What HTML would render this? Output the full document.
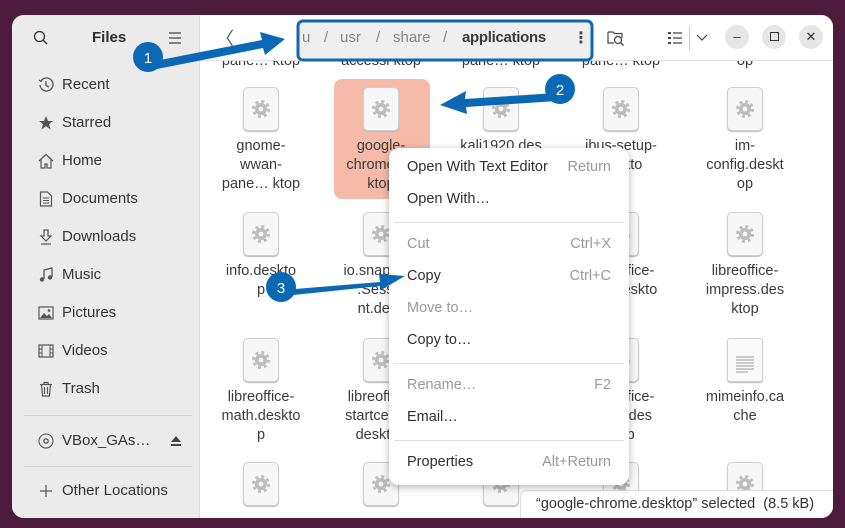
<!DOCTYPE html>
<html><head><meta charset="utf-8"><style>
*{box-sizing:border-box;margin:0;padding:0}
body{width:845px;height:528px;overflow:hidden;background:#4d1b3b;font-family:"Liberation Sans","DejaVu Sans",sans-serif;position:relative}
.win{position:absolute;left:12px;top:15px;width:821px;height:503px;border-radius:12px;overflow:hidden;background:#fff}
.side{position:absolute;left:0;top:0;width:188px;height:503px;background:#ebebeb;border-right:1px solid #ddd}
.a{position:absolute}
.si{position:absolute;left:50px;font-size:15px;color:#333}
.ic{position:absolute;left:26px;width:16px;height:16px}
.sep{position:absolute;left:12px;width:168px;height:1px;background:#d4d4d4}
.content{position:absolute;left:189px;top:46px;width:632px;height:457px;overflow:hidden;background:#fff}
.hdr{position:absolute;left:189px;top:0;width:632px;height:46px;background:#fff;border-bottom:1px solid #e2e2e2}
.cell{position:absolute;width:110px;text-align:center;font-size:14.5px;line-height:19px;color:#3a3a3a}
.fi{position:absolute;width:36px;height:44px;border:1px solid #cfcfcf;border-radius:5px;background:#f7f7f7;box-shadow:0 1px 1px #bbb}
.menu{position:absolute;left:389px;top:148px;width:240px;height:337px;background:#fff;border-radius:10px;box-shadow:0 2px 8px rgba(0,0,0,.3)}
.mi{position:absolute;left:18px;font-size:14.5px;color:#2e2e2e}
.mi.d{color:#999}
.k{position:absolute;right:18px;font-size:14.5px;color:#999}
.ms{position:absolute;left:5px;width:230px;height:1px;background:#dedede}
.wb{position:absolute;top:10px;width:24px;height:24px;border-radius:12px;background:#e6e6e6;text-align:center;line-height:24px;font-size:13px;color:#333}
.p{position:absolute;top:14px;font-size:15px;color:#888}
</style></head><body>
<div class="win">
<div class="side">
 <svg class="a" style="left:21px;top:15px" width="16" height="16" viewBox="0 0 16 16"><circle cx="6.5" cy="6.5" r="5" fill="none" stroke="#333" stroke-width="1.3"/><path d="M10 10l4 4" stroke="#333" stroke-width="1.4"/></svg>
 <div class="a" style="left:80px;top:14px;font-size:15px;font-weight:bold;color:#2e2e2e">Files</div>
 <svg class="a" style="left:157px;top:17px" width="12" height="12"><path d="M0 1h12M0 6h12M0 11h12" stroke="#444" stroke-width="1.2"/></svg>
 <svg class="ic" style="top:62px" viewBox="0 0 16 16"><path d="M3 4A6.5 6.5 0 1 1 2 8" fill="none" stroke="#555" stroke-width="1.3"/><path d="M1 3l2 1.5L4.5 2" fill="none" stroke="#555" stroke-width="1.2"/><path d="M8 4v4.5l3 1.5" fill="none" stroke="#555" stroke-width="1.3"/></svg>
 <div class="si" style="top:61px">Recent</div>
 <svg class="ic" style="top:100px" viewBox="0 0 16 16"><path d="M8 1l2 5h5l-4 3.3 1.6 5.2L8 11.3 3.4 14.5 5 9.3 1 6h5z" fill="#555"/></svg>
 <div class="si" style="top:99px">Starred</div>
 <svg class="ic" style="top:138px" viewBox="0 0 16 16"><path d="M1 8L8 1.5 15 8M3 6.5V15h4v-4h2v4h4V6.5" fill="none" stroke="#555" stroke-width="1.2"/></svg>
 <div class="si" style="top:137px">Home</div>
 <svg class="ic" style="top:176px" viewBox="0 0 16 16"><path d="M2.5 1h7l4 4v10h-11z" fill="none" stroke="#555" stroke-width="1.2"/><path d="M5 7h6M5 9.5h6M5 12h6" stroke="#555"/></svg>
 <div class="si" style="top:175px">Documents</div>
 <svg class="ic" style="top:214px" viewBox="0 0 16 16"><path d="M6 1h4v6h3L8 12 3 7h3zM3 15h10" fill="none" stroke="#555" stroke-width="1.2"/></svg>
 <div class="si" style="top:213px">Downloads</div>
 <svg class="ic" style="top:252px" viewBox="0 0 16 16"><path d="M6 12V3l8-2v9" fill="none" stroke="#555" stroke-width="1.3"/><circle cx="4" cy="12.5" r="2.2" fill="#555"/><circle cx="12" cy="10.5" r="2.2" fill="#555"/></svg>
 <div class="si" style="top:251px">Music</div>
 <svg class="ic" style="top:290px" viewBox="0 0 16 16"><rect x="1" y="2" width="14" height="12" fill="none" stroke="#555" stroke-width="1.2"/><path d="M2 13l4-5 3 3 2-2 3 4z" fill="#555"/><circle cx="11" cy="5.5" r="1.3" fill="#555"/></svg>
 <div class="si" style="top:289px">Pictures</div>
 <svg class="ic" style="top:328px" viewBox="0 0 16 16"><rect x="1" y="2" width="14" height="12" fill="none" stroke="#555" stroke-width="1.2"/><path d="M4 2v12M12 2v12M1 6h3M1 10h3M12 6h3M12 10h3" stroke="#555"/></svg>
 <div class="si" style="top:327px">Videos</div>
 <svg class="ic" style="top:366px" viewBox="0 0 16 16"><path d="M2 3.5h12M6 3.5V1.5h4v2M3.5 3.5l1 11.5h7l1-11.5M6.5 6v7M9.5 6v7" fill="none" stroke="#555" stroke-width="1.2"/></svg>
 <div class="si" style="top:365px">Trash</div>
 <div class="sep" style="top:400px"></div>
 <svg class="ic" style="top:418px" viewBox="0 0 16 16"><circle cx="8" cy="8" r="7" fill="none" stroke="#555" stroke-width="1.1"/><circle cx="8" cy="8" r="2.2" fill="none" stroke="#555" stroke-width="1.3"/></svg>
 <div class="si" style="top:417px">VBox_GAs…</div>
 <svg class="a" style="left:159px;top:421px" width="10" height="10"><path d="M5 0l5 6H0z M0 8h10v2H0z" fill="#444"/></svg>
 <div class="sep" style="top:451px"></div>
 <svg class="ic" style="top:468px" viewBox="0 0 16 16"><path d="M8 2v12M2 8h12" stroke="#555" stroke-width="1.2"/></svg>
 <div class="si" style="top:467px">Other Locations</div>
</div>
<div class="content" id="c"></div>
<div class="hdr">
 <div class="a" style="left:15px;top:10px;font-size:18px;color:#555">〈</div>
 <div class="p" style="left:101px">u</div>
 <div class="p" style="left:123px">/</div>
 <div class="p" style="left:139px">usr</div>
 <div class="p" style="left:175px">/</div>
 <div class="p" style="left:192px">share</div>
 <div class="p" style="left:242px">/</div>
 <div class="p" style="left:261px;color:#333;font-weight:bold;letter-spacing:-0.3px">applications</div>
 <div class="a" style="left:372px;top:13px;font-size:16px;color:#444;font-weight:bold">⋮</div>
 <svg class="a" style="left:406px;top:14px" width="18" height="17" viewBox="0 0 18 17"><path d="M1 3h5l1.5 1.5H15V9M1 3v11h6" fill="none" stroke="#444" stroke-width="1.2"/><circle cx="11" cy="11" r="3.5" fill="none" stroke="#444" stroke-width="1.3"/><path d="M13.5 13.5l3 3" stroke="#444" stroke-width="1.3"/></svg>
 <svg class="a" style="left:467px;top:16px" width="14" height="13"><path d="M0 1h3v2H0zM0 6h3v2H0zM0 11h3v2H0z" fill="#444"/><path d="M5 2h9M5 7h9M5 12h9" stroke="#444" stroke-width="1.2"/></svg>
 <div class="a" style="left:488px;top:11px;width:1px;height:24px;background:#ccc"></div>
 <svg class="a" style="left:495px;top:19px" width="12" height="8"><path d="M1 1l5 5 5-5" fill="none" stroke="#444" stroke-width="1.2"/></svg>
 <div class="wb" style="left:524px">–</div>
 <div class="wb" style="left:561px"><span style="display:inline-block;width:9px;height:9px;border:1.3px solid #333;margin-top:7px;vertical-align:top"></span></div>
 <div class="wb" style="left:598px">✕</div>
</div>
</div>

<div class="a" style="left:334px;top:79px;width:96px;height:120px;background:#f6bba8;border-radius:8px"></div>
<div id="grid"></div>

<div class="a" style="left:520px;top:490px;width:313px;height:28px;background:#fff;border:1px solid #ddd;border-right:none;border-bottom:none;border-radius:6px 0 12px 0;font-size:14.5px;color:#333;padding:5px 0 0 15px;white-space:nowrap">“google-chrome.desktop” selected&nbsp;&nbsp;(8.5 kB)</div>

<div class="menu">
 <div class="mi" style="top:11px">Open With Text Editor</div><div class="k" style="top:11px">Return</div>
 <div class="mi" style="top:43px">Open With…</div>
 <div class="ms" style="top:74px"></div>
 <div class="mi d" style="top:88px">Cut</div><div class="k" style="top:88px">Ctrl+X</div>
 <div class="mi" style="top:120px">Copy</div><div class="k" style="top:120px">Ctrl+C</div>
 <div class="mi d" style="top:152px">Move to…</div>
 <div class="mi" style="top:184px">Copy to…</div>
 <div class="ms" style="top:215px"></div>
 <div class="mi d" style="top:229px">Rename…</div><div class="k" style="top:229px">F2</div>
 <div class="mi" style="top:261px">Email…</div>
 <div class="ms" style="top:292px"></div>
 <div class="mi" style="top:306px">Properties</div><div class="k" style="top:306px">Alt+Return</div>
</div>

<svg class="a" style="left:0;top:0" width="845" height="528">
 <rect x="298" y="21" width="294" height="39" rx="5" fill="rgba(120,120,120,0.12)" stroke="#1268b0" stroke-width="3"/>
 <g fill="#0a68b4">
  <path d="M150 62 L262 40 L260 32 L285 39 L265 55 L263 48 L152 70z"/>
  <circle cx="148" cy="57" r="15"/>
  <path d="M556 93 L465 99 L466 91 L440 105 L467 114 L466 107 L557 101z"/>
  <circle cx="560" cy="89" r="15"/>
  <path d="M283 290 L380 282 L379 274 L405 276 L381 290 L380 286 L284 296z"/>
  <circle cx="281" cy="287" r="15"/>
 </g>
 <g fill="#fff" font-family="Liberation Sans,sans-serif" font-size="15" text-anchor="middle">
  <text x="148" y="63">1</text><text x="560" y="95">2</text><text x="281" y="293">3</text>
 </g>
</svg>

<script>
var cols=[261,381,501,621,745];
var rows=[{i:87,t:[["gnome-","wwan-","pane… ktop"],["google-","chrome-de","ktop"],["kali1920.des",""],["ibus-setup-","deskto"],["im-","config.deskt","op"]]},
{i:212,t:[["info.deskto","p"],["io.snapcraft",".Sessio","nt.desk"],[""],["libreoffice-","calc.deskto"],["libreoffice-","impress.des","ktop"]]},
{i:338,t:[["libreoffice-","math.deskto","p"],["libreoffice-","startcenter.","desktop"],[""],["libreoffice-","writer.des","ktop"],["mimeinfo.ca","che"]]},
{i:462,t:[[],[],[],[],[]]}];
var h="";
function gear(x,y){return '<svg style="position:absolute;left:'+(x-10)+'px;top:'+(y-10)+'px" width="20" height="20" viewBox="0 0 20 20"><circle cx="10" cy="10" r="6" fill="#bdbdbd"/><circle cx="10" cy="10" r="7.5" fill="none" stroke="#bdbdbd" stroke-width="3" stroke-dasharray="2.9 3"/><circle cx="10" cy="10" r="2.4" fill="#f7f7f7"/></svg>';}
rows.forEach(function(r,ri){cols.forEach(function(c,ci){
 if(ri==2&&ci==4){h+='<div class="fi" style="left:'+(c-18)+'px;top:'+r.i+'px;background:#fafafa;border-radius:3px"><svg width="34" height="42"><path d="M8 18h18M8 21h18M8 24h18M8 27h18M8 30h18M8 33h12" stroke="#999"/></svg></div>';}
 else{var hh=ri==3?Math.min(44,518-r.i):44;h+='<div class="fi" style="left:'+(c-18)+'px;top:'+r.i+'px;height:'+hh+'px;overflow:hidden"></div>'+gear(c,r.i+22);}
 var t=r.t[ci]||[];
 if(t.length)h+='<div class="cell" style="left:'+(c-55)+'px;top:'+(r.i+50)+'px">'+t.join('<br>')+'</div>';
});});
document.getElementById('grid').innerHTML=h;
var top0="";
["pane… ktop","accessi ktop","pane… ktop","pane… ktop","op"].forEach(function(s,i){top0+='<div class="cell" style="left:'+(cols[i]-55-201)+'px;top:-9px">'+s+'</div>';});
document.getElementById('c').innerHTML=top0;
</script>
</body></html>
